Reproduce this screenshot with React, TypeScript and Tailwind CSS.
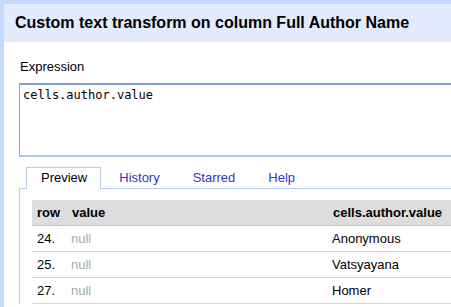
import React from 'react';

/* Custom text transform dialog — preview of the expression result */

const ROWS = [
  { row: '24.', value: 'null', result: 'Anonymous' },
  { row: '25.', value: 'null', result: 'Vatsyayana' },
  { row: '27.', value: 'null', result: 'Homer' },
];

const TABS = ['Preview', 'History', 'Starred', 'Help'];

export default function App() {
  return (
    <div
      className="h-[307px] w-[451px] overflow-hidden bg-[#c6d9fb] pl-[4px] pt-[4px] text-[13px] text-black"
      style={{ fontFamily: '"Liberation Sans", Arial, sans-serif' }}
    >
      <div className="h-full w-[480px] bg-white">
        {/* Title band */}
        <div className="flex h-[38px] items-center bg-[#e1ebfc] pl-[11px] text-[16px] font-bold">
          Custom text transform on column Full Author Name
        </div>

        <div className="pl-[15px] pt-[17px]">
          <div className="mb-[9px] pl-px leading-[15px]">Expression</div>

          {/* Expression box */}
          <div
            className="h-[74px] w-[470px] border-b-2 border-l border-t-2 border-b-[#b4c8ef] border-l-[#8eaae0] border-t-[#7f9fdc] px-[3px] pt-[3px] text-[12px] leading-[15px]"
            style={{ fontFamily: '"DejaVu Sans Mono", monospace' }}
          >
            cells.author.value
          </div>

          {/* Tabs */}
          <div className="mt-[10px] flex h-[22px] items-stretch gap-[3px] border-b border-[#b8cbf3] pl-[7px]">
            {TABS.map((t, i) => (
              <div
                key={t}
                className={
                  i === 0
                    ? '-mb-px flex items-center border border-b-0 border-[#b8cbf3] bg-white pl-[14px] pr-[13px] pb-px'
                    : 'flex items-center border border-transparent px-[14px] text-[#3434cc]'
                }
              >
                {t}
              </div>
            ))}
          </div>

          {/* Tab panel */}
          <div className="border-l border-[#b8cbf3] pl-[12px] pt-[11px]">
            <div className="w-[460px]">
              <div className="flex h-[26px] items-center border-b border-[#c6c6c6] bg-[#dddddd] font-bold">
                <div className="w-[35px] pl-[5px]">row</div>
                <div className="w-[261px] pl-[5px]">value</div>
                <div className="pl-[5px]">cells.author.value</div>
              </div>
              {ROWS.map((r) => (
                <div key={r.row} className="flex h-[26px] items-center border-b border-[#d2d2d2]">
                  <div className="w-[35px] pl-[5px]">{r.row}</div>
                  <div className="w-[261px] pl-[4px] text-[#aaaaaa]">{r.value}</div>
                  <div className="pl-[4px]">{r.result}</div>
                </div>
              ))}
            </div>
          </div>
        </div>
      </div>
    </div>
  );
}
